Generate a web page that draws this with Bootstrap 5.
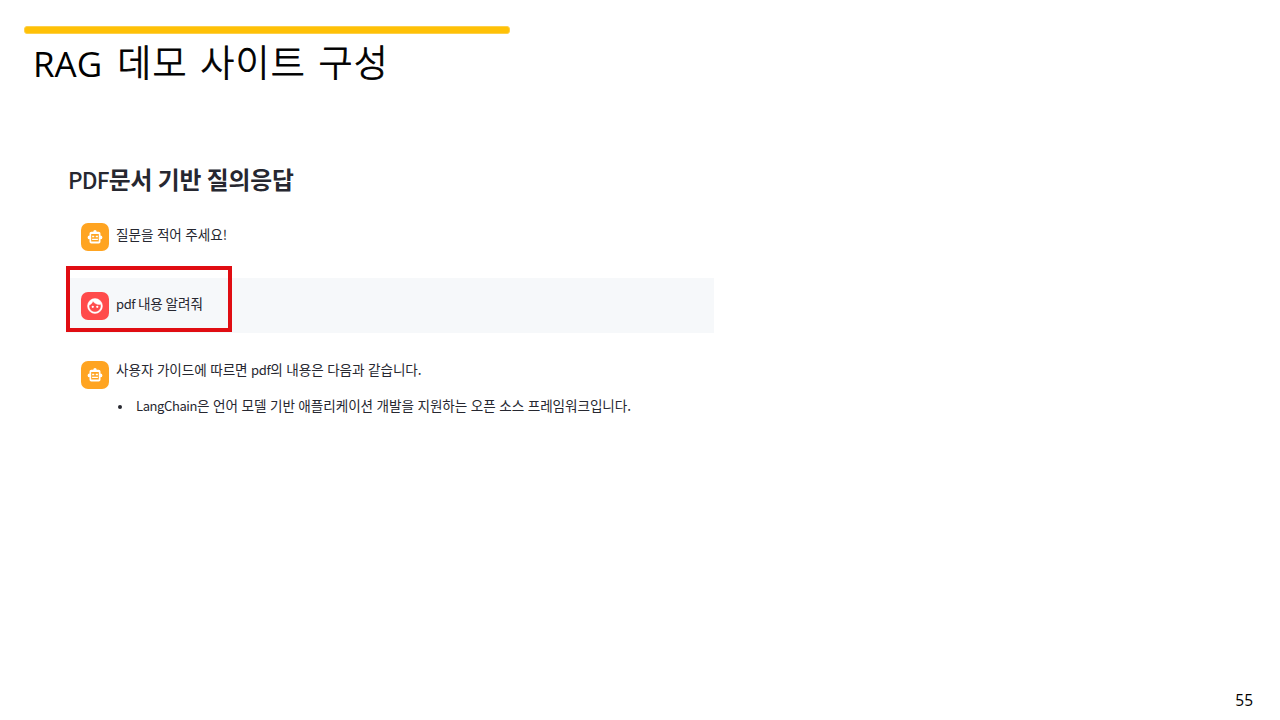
<!DOCTYPE html>
<html lang="ko">
<head>
  <meta charset="UTF-8">
  <meta name="viewport" content="width=device-width, initial-scale=1">
  <title>RAG 데모 사이트 구성</title>
  <link href="https://cdn.jsdelivr.net/npm/bootstrap@5.3.3/dist/css/bootstrap.min.css" rel="stylesheet">
  <style>
    body {
      font-family: "Noto Sans CJK KR", sans-serif;
      color: #262730;
    }
    .slide {
      height: 720px;
      padding: 26px 0 0 24px;
    }
    .title-bar {
      width: 486px;
      height: 8px;
      background: #ffc107;
      border: 1px solid #fdd04a;
      border-radius: 3px;
    }
    .slide-title {
      margin: 0 0 0 9px;
      height: 54px;
      font-family: "Open Sans", "Noto Sans CJK KR", sans-serif;
      font-size: 35px;
      line-height: 54px;
      font-weight: 400;
      color: #000;
    }
    .slide-title .ko {
      margin-left: 6px;
      font-family: "Noto Sans CJK KR", sans-serif;
      font-weight: 300;
      font-size: 37px;
      letter-spacing: 1.2px;
      word-spacing: 1px;
      -webkit-text-stroke: 0.8px #000;
    }
    .chat {
      width: 648px;
      margin: 73px 0 0 42px;
    }
    .chat-title {
      height: 36px;
      margin-left: 2px;
      font-size: 23.8px;
      line-height: 36px;
      font-weight: 700;
      letter-spacing: -0.15px;
      word-spacing: -1px;
    }
    .chat-title .latin {
      font-size: 22.5px;
      font-weight: 500;
      letter-spacing: -0.8px;
    }
    .messages {
      margin-top: 12px;
    }
    .message {
      height: 55px;
      padding: 13px 0 0 15px;
      gap: 7px;
      font-size: 13.6px;
      line-height: 22px;
      letter-spacing: -0.06px;
      word-spacing: -0.2px;
    }
    .message .latin {
      font-size: 13px;
      letter-spacing: -0.4px;
    }
    .message-user {
      background: #f6f8fa;
      margin: 14px 0;
    }
    .message-user p {
      word-spacing: -1px;
    }
    .message p {
      padding-top: 1px;
    }
    .message .answer {
      margin-top: -3px;
    }
    .avatar {
      width: 28px;
      height: 28px;
      margin-top: 0.5px;
      border-radius: 7px;
      background: #ffa421;
      fill: #fff;
    }
    .avatar-user {
      background: #ff4b4b;
    }
    .message ul {
      margin-top: 13px;
    }
    .message li {
      gap: 14px;
    }
    .message li::before {
      content: "";
      width: 4px;
      height: 4px;
      margin: 2px 0 0 2px;
      border-radius: 50%;
      background: #262730;
    }
    .highlight {
      left: 0;
      top: -12px;
      width: 166px;
      height: 66px;
      border: 4px solid #e00d12;
    }
    .page-number {
      padding: 0 27px 8px 0;
      font-family: "Open Sans", sans-serif;
      font-size: 15.5px;
      line-height: 24px;
      color: #000;
    }
  </style>
</head>
<body class="bg-white">

  <svg class="d-none">
    <symbol id="robot" viewBox="0 0 16 16">
      <path fill-rule="evenodd" d="M6.300 2.800a1.700 1.700 0 0 1 3.400 0h2a1.800 1.800 0 0 1 1.800 1.800v1.900a1.900 1.900 0 0 1 0 3.800v2.400a1.800 1.800 0 0 1-1.800 1.800H4.300a1.800 1.800 0 0 1-1.800-1.800v-2.400a1.900 1.900 0 0 1 0-3.800V4.600a1.800 1.800 0 0 1 1.800-1.800zM4.200 4.900v7.500h7.600V4.900z"/>
      <path d="M5.100 6.800h2.200v1.500H5.100zM8.700 6.800h2.200v1.500H8.700zM5.100 9.800h5.800v1.300H5.100z"/>
    </symbol>
    <symbol id="face" viewBox="0 0 24 24">
      <circle cx="9" cy="13" r="1.5"/>
      <circle cx="15" cy="13" r="1.5"/>
      <path fill-rule="evenodd" stroke="#fff" stroke-width=".6" d="M12 2a10 10 0 1 0 0 20 10 10 0 0 0 0-20zm0 18c-4.410 0-8-3.590-8-8 0-.29.02-.58.05-.86 2.360-1.050 4.230-2.980 5.210-5.370C11.070 8.330 14.050 10 17.420 10c.78 0 1.530-.09 2.250-.26.21.71.33 1.470.33 2.260 0 4.410-3.590 8-8 8z"/>
    </symbol>
  </svg>

  <main class="slide d-flex flex-column overflow-hidden">
    <div class="title-bar"></div>
    <h1 class="slide-title text-nowrap">RAG <span class="ko">데모 사이트 구성</span></h1>

    <!-- Chat -->
    <section class="chat text-nowrap">
      <h2 class="chat-title mb-0"><span class="latin">PDF</span>문서 기반 질의응답</h2>

      <div class="messages">
        <div class="message d-flex">
          <svg class="avatar flex-shrink-0" viewBox="0 0 28 28"><use href="#robot" x="6" y="6" width="16" height="16"/></svg>
          <p class="mb-0">질문을 적어 주세요!</p>
        </div>

        <div class="message message-user d-flex position-relative">
          <svg class="avatar avatar-user flex-shrink-0" viewBox="0 0 28 28"><use href="#face" x="5" y="5" width="18" height="18"/></svg>
          <p class="mb-0"><span class="latin">pdf</span> 내용 알려줘</p>
          <div class="highlight position-absolute"></div>
        </div>

        <div class="message d-flex">
          <svg class="avatar flex-shrink-0" viewBox="0 0 28 28"><use href="#robot" x="6" y="6" width="16" height="16"/></svg>
          <div class="answer">
            <p class="mb-0">사용자 가이드에 따르면 <span class="latin">pdf</span>의 내용은 다음과 같습니다.</p>
            <ul class="list-unstyled mb-0">
              <li class="d-flex align-items-center"><span><span class="latin">LangChain</span>은 언어 모델 기반 애플리케이션 개발을 지원하는 오픈 소스 프레임워크입니다.</span></li>
            </ul>
          </div>
        </div>
      </div>
    </section>

    <footer class="page-number mt-auto text-end">55</footer>
  </main>

</body>
</html>
